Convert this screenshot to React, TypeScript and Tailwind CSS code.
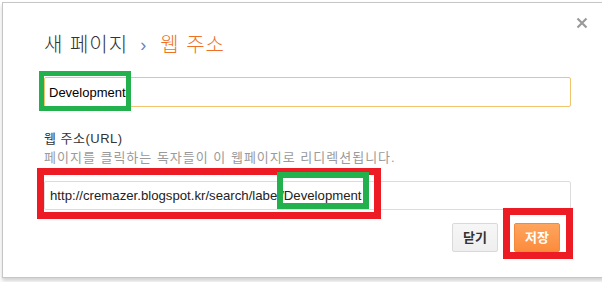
import React from 'react';

const font = { fontFamily: '"Liberation Sans", "Noto Sans CJK KR", sans-serif' };

export default function App() {
    return (
        <div className="relative w-[602px] h-[282px] overflow-hidden bg-white" style={font}>
            <div className="pt-[2px] pl-[2px]">
                {/* dialog */}
                <div className="relative w-[640px] h-[276px] bg-white border border-[#c6c6c6] shadow-[0_3px_4px_rgba(0,0,0,0.18)]">
                    <button className="absolute top-[14px] left-[573px] w-[12px] h-[12px] text-[#9a9a9a]">
                        <svg viewBox="0 0 12 12" width="12" height="12">
                            <path d="M1.5 1.5 L10.5 10.5 M10.5 1.5 L1.5 10.5" stroke="currentColor" strokeWidth="2.2" />
                        </svg>
                    </button>

                    <div className="pl-[41px] pt-[28px] w-[568px]">
                        {/* title */}
                        <div className="flex items-center h-[28px] text-[20px] leading-[28px] font-light tracking-[1px]">
                            <span className="text-[#333]">새 페이지</span>
                            <span className="text-[#5b87c7] text-[18px] ml-[12px] mr-[13px]">›</span>
                            <span className="text-[#ee7127]">웹 주소</span>
                        </div>

                        <input
                            readOnly
                            value="Development"
                            className="mt-[18px] w-[527px] h-[30px] px-[4px] border border-[#f1c36b] rounded-[2px] text-[13px] text-black outline-none"
                        />

                        <div className="mt-[22px] text-[13px] leading-[19px] text-[#333] tracking-[0.5px]">웹 주소(URL)</div>
                        <div className="text-[13px] leading-[19px] text-[#9a9a9a] tracking-[1px]">페이지를 클릭하는 독자들이 이 웹페이지로 리디렉션됩니다.</div>

                        <input
                            readOnly
                            value="http://cremazer.blogspot.kr/search/label/Development"
                            className="mt-[14px] w-[527px] h-[29px] px-[5px] border border-[#dcdcdc] rounded-[2px] text-[13.2px] text-[#222] outline-none"
                        />

                        <div className="flex justify-end gap-[16px] mt-[13px] w-[516px]">
                            <button className="w-[46px] h-[29px] rounded-[2px] border border-[#d9d9d9] bg-gradient-to-b from-[#f6f6f6] to-[#efefef] text-[13px] font-bold text-[#333]">
                                닫기
                            </button>
                            <button className="w-[46px] h-[29px] rounded-[2px] border border-[#f4893a] bg-gradient-to-b from-[#ffa55e] to-[#fb8b3c] text-[13px] font-bold text-white">
                                저장
                            </button>
                        </div>
                    </div>
                </div>
            </div>

            {/* annotation boxes */}
            <div className="absolute left-[39px] top-[71px] w-[92px] h-[40px] border-[5px] border-[#22b14c]" />
            <div className="absolute left-[37px] top-[168px] w-[344px] h-[51px] border-[7px] border-[#ed1c24]" />
            <div className="absolute left-[277px] top-[172px] w-[92px] h-[37px] border-[6px] border-[#22b14c]" />
            <div className="absolute left-[503px] top-[208px] w-[70px] h-[51px] border-[7px] border-[#ed1c24]" />
        </div>
    );
}
